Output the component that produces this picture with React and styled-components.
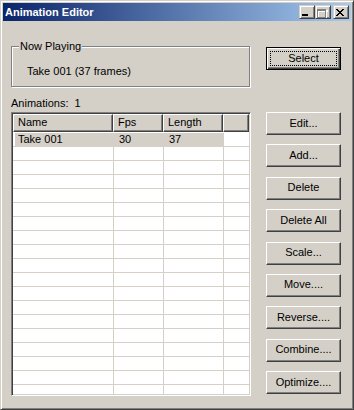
import styled, { createGlobalStyle, css } from 'styled-components'

const Global = createGlobalStyle`
	html, body {
		margin: 0;
		padding: 0;
		background: #d4d0c8;
	}
	body {
		font-family: "Liberation Sans", Arial, sans-serif;
		font-size: 11px;
		color: #000;
	}
`;

const raised = css`
	border: 1px solid;
	border-color: #fff #404040 #404040 #fff;
	box-shadow: inset -1px -1px #808080;
`;

const Window = styled.div`
	box-sizing: border-box;
	width: 354px;
	height: 410px;
	padding: 2px;
	background: #d4d0c8;
	border: 1px solid;
	border-color: #d4d0c8 #404040 #404040 #d4d0c8;
	box-shadow: inset 1px 1px #fff, inset -1px -1px #808080;
	display: flex;
	flex-direction: column;
`;

const TitleBar = styled.div`
	height: 18px;
	flex: none;
	display: flex;
	align-items: center;
	padding: 0 2px 0 2px;
	background: linear-gradient(to right, #0a246a, #a6caf0);
`;

const Title = styled.div`
	flex: 1;
	color: #fff;
	font-weight: bold;
	font-size: 11px;
	line-height: 13px;
`;

const CaptionButton = styled.div`
	box-sizing: border-box;
	width: 16px;
	height: 14px;
	margin-left: ${p => (p.$gap ? '2px' : '0')};
	background: #d4d0c8;
	border: 1px solid;
	border-color: #d4d0c8 #404040 #404040 #d4d0c8;
	box-shadow: inset 1px 1px #fff, inset -1px -1px #808080;

	svg {
		display: block;
	}
`;

const Body = styled.div`
	flex: 1;
	display: flex;
	padding: 0 10px 0 8px;
`;

const LeftColumn = styled.div`
	width: 240px;
	margin-right: 15px;
	display: flex;
	flex-direction: column;
`;

const RightColumn = styled.div`
	width: 75px;
	display: flex;
	flex-direction: column;
	padding-top: 26px;
`;

const Group = styled.div`
	position: relative;
	box-sizing: border-box;
	width: 239px;
	height: 41px;
	margin-top: 25px;
	padding: 18px 0 0 15px;
	border: 1px solid #808080;
	box-shadow: inset 1px 1px #fff, 1px 1px #fff;
	line-height: 13px;
`;

const GroupLabel = styled.span`
	position: absolute;
	top: -7px;
	left: 7px;
	padding: 0 1px;
	background: #d4d0c8;
	line-height: 13px;
`;

const Caption = styled.div`
	margin-top: 10px;
	line-height: 13px;
	white-space: pre;
`;

const ListView = styled.div`
	box-sizing: border-box;
	width: 240px;
	height: 284px;
	margin-top: 2px;
	padding: 1px;
	background: #fff;
	border: 1px solid;
	border-color: #808080 #fff #fff #808080;
	box-shadow: inset 1px 1px #404040, inset -1px -1px #d4d0c8;
	overflow: hidden;
	display: flex;
	flex-direction: column;
`;

const columns = css`
	display: grid;
	grid-template-columns: 100px 50px 60px 1fr;
`;

const Header = styled.div`
	${columns};
	flex: none;
	height: 18px;
`;

const HeaderCell = styled.div`
	${raised};
	box-sizing: border-box;
	background: #d4d0c8;
	padding-left: 4px;
	line-height: 15px;
`;

const Rows = styled.div`
	flex: 1;
	overflow: hidden;
	padding-top: 1px;
`;

const Row = styled.div`
	${columns};
	box-sizing: border-box;
	height: 14px;
	border-bottom: 1px solid #d4d0c8;
`;

const Cell = styled.div`
	padding-left: 5px;
	line-height: 13px;
	border-left: ${p => (p.$first ? 'none' : '1px solid #d4d0c8')};
	background: ${p => (p.$selected ? '#d4d0c8' : 'transparent')};
	box-shadow: ${p => (p.$selected && p.$first ? 'inset 2px 0 #fff' : 'none')};
	white-space: nowrap;
	overflow: hidden;
`;

const Button = styled.div`
	${raised};
	box-sizing: border-box;
	width: 75px;
	height: 23px;
	background: #d4d0c8;
	display: flex;
	align-items: center;
	justify-content: center;
	line-height: 13px;
	padding-bottom: 1px;
`;

const DefaultButton = styled(Button)`
	border: 1px solid #000;
	box-shadow: inset 1px 1px #fff, inset -1px -1px #404040, inset -2px -2px #808080;
	outline: 1px dotted #000;
	outline-offset: -5px;
`;

const ButtonStack = styled.div`
	height: 282px;
	margin-top: 42px;
	display: flex;
	flex-direction: column;
	justify-content: space-between;
`;

const closeGlyph = [
	'XX....XX',
	'.XX..XX.',
	'..XXXX..',
	'...XX...',
	'..XXXX..',
	'.XX..XX.',
	'XX....XX',
];

function MinimizeIcon() {
	return (
		<svg width="14" height="12" shapeRendering="crispEdges">
			<rect x="2" y="8" width="6" height="2" fill="#000" />
		</svg>
	)
}

function MaximizeIcon() {
	return (
		<svg width="14" height="12" shapeRendering="crispEdges" fill="none">
			<path d="M2.5 4.5h8v8h-8z M2 4h9v1H2z" stroke="#fff" />
			<path d="M1.5 3.5h8v8h-8z" stroke="#808080" />
			<rect x="1" y="3" width="9" height="2" fill="#808080" />
		</svg>
	)
}

function CloseIcon() {
	const cells = []
	closeGlyph.forEach((line, y) => {
		line.split('').forEach((c, x) => {
			if (c === 'X') cells.push(<rect key={`${x}-${y}`} x={x + 2} y={y + 3} width="1" height="1" fill="#000" />)
		})
	})
	return (
		<svg width="14" height="12" shapeRendering="crispEdges">
			{cells}
		</svg>
	)
}

const animations = [{ name: 'Take 001', fps: '30', length: '37' }]
const rows = Array.from({ length: 20 }, (_, i) => animations[i] || null)

const actions = ['Edit...', 'Add...', 'Delete', 'Delete All', 'Scale...', 'Move....', 'Reverse....', 'Combine....', 'Optimize....']

export default function App() {
	return (
		<Window>
			<Global />
			<TitleBar>
				<Title>Animation Editor</Title>
				<CaptionButton><MinimizeIcon /></CaptionButton>
				<CaptionButton><MaximizeIcon /></CaptionButton>
				<CaptionButton $gap><CloseIcon /></CaptionButton>
			</TitleBar>
			<Body>
				<LeftColumn>
					<Group>
						<GroupLabel>Now Playing</GroupLabel>
						Take 001 (37 frames)
					</Group>
					<Caption>{'Animations:  1'}</Caption>
					<ListView>
						<Header>
							<HeaderCell>Name</HeaderCell>
							<HeaderCell>Fps</HeaderCell>
							<HeaderCell>Length</HeaderCell>
							<HeaderCell />
						</Header>
						<Rows>
							{rows.map((r, i) => (
								<Row key={i}>
									<Cell $first $selected={i === 0}>{r?.name}</Cell>
									<Cell $selected={i === 0}>{r?.fps}</Cell>
									<Cell $selected={i === 0}>{r?.length}</Cell>
									<Cell />
								</Row>
							))}
						</Rows>
					</ListView>
				</LeftColumn>
				<RightColumn>
					<DefaultButton>Select</DefaultButton>
					<ButtonStack>
						{actions.map(a => <Button key={a}>{a}</Button>)}
					</ButtonStack>
				</RightColumn>
			</Body>
		</Window>
	)
}
